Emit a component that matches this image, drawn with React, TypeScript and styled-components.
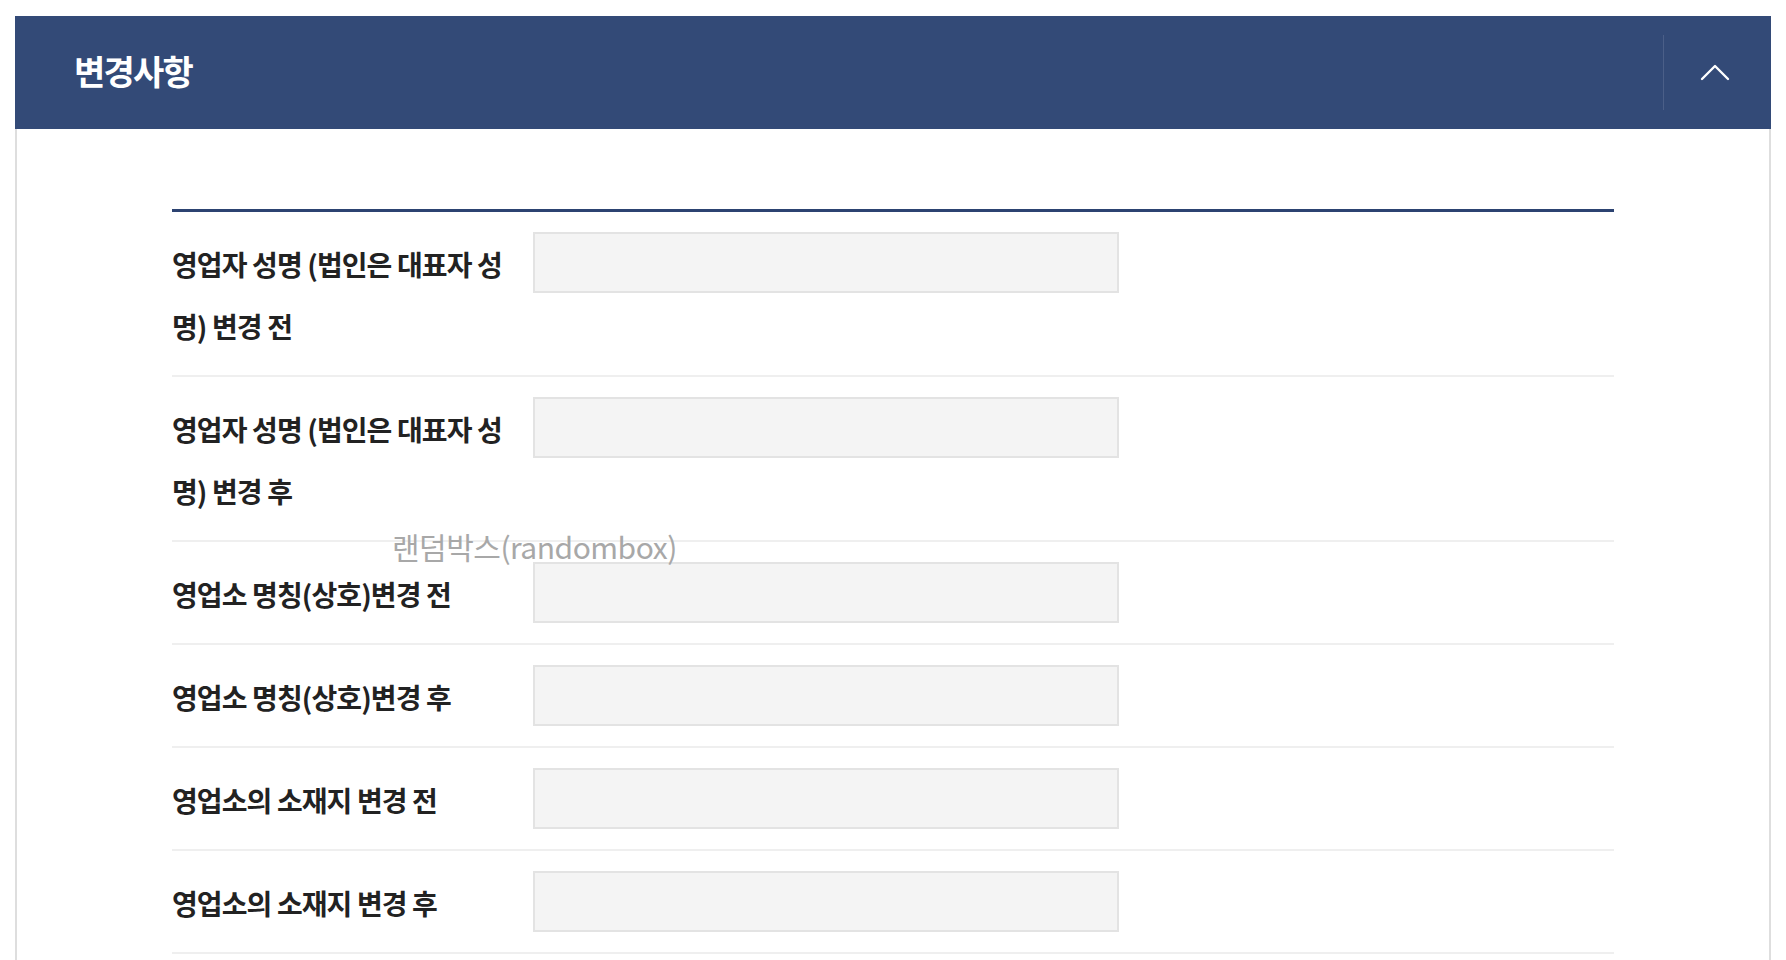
import React from 'react';
import styled, { createGlobalStyle } from 'styled-components';

const GlobalStyle = createGlobalStyle`
  html, body {
    margin: 0;
    padding: 0;
    background: #ffffff;
  }
  body {
    font-family: "Noto Sans CJK KR", "Noto Sans", sans-serif;
    color: #222222;
  }
`;

interface Field {
  label: string;
  value?: string;
}

const fields: Field[] = [
  { label: '영업자 성명 (법인은 대표자 성명) 변경 전' },
  { label: '영업자 성명 (법인은 대표자 성명) 변경 후' },
  { label: '영업소 명칭(상호)변경 전' },
  { label: '영업소 명칭(상호)변경 후' },
  { label: '영업소의 소재지 변경 전' },
  { label: '영업소의 소재지 변경 후' },
];

function App() {
  return (
    <>
      <GlobalStyle />
      <Page>
        <Panel>
          <Header>
            <Title>변경사항</Title>
            <ToggleButton aria-label="접기">
              <svg width="30" height="17" viewBox="0 0 30 17" fill="none">
                <path d="M2 15 L15 2 L28 15" stroke="#ffffff" strokeWidth="2.4" strokeLinecap="round" strokeLinejoin="round" />
              </svg>
            </ToggleButton>
          </Header>
          <Body>
            <FieldTable>
              {fields.map((f) => (
                <Row key={f.label}>
                  <Label>{f.label}</Label>
                  <ValueBox>{f.value}</ValueBox>
                </Row>
              ))}
            </FieldTable>
          </Body>
          <Watermark>랜덤박스(randombox)</Watermark>
        </Panel>
      </Page>
    </>
  );
}

const Page = styled.div`
  padding: 16px 15px 0 15px;
`;

const Panel = styled.section`
  position: relative;
  border-left: 2px solid #dedede;
  border-right: 2px solid #dedede;
  min-height: 944px;
  box-sizing: border-box;
`;

const Header = styled.div`
  display: flex;
  align-items: center;
  height: 113px;
  margin: 0 -2px;
  background: #334a77;
  padding-left: 59px;
`;

const Title = styled.h2`
  margin: 0;
  flex: 1;
  font-size: 34px;
  font-weight: 700;
  letter-spacing: -1.8px;
  color: #ffffff;
  padding-bottom: 4px;
`;

const ToggleButton = styled.button`
  display: flex;
  align-items: center;
  justify-content: center;
  width: 108px;
  height: 75px;
  padding: 0 6px 0 0;
  border: none;
  border-left: 1px solid #4b5f88;
  background: transparent;
  cursor: pointer;
`;

const Body = styled.div`
  padding: 80px 155px 0 155px;
`;

const FieldTable = styled.div`
  border-top: 3px solid #2c4371;
`;

const Row = styled.div`
  display: flex;
  align-items: flex-start;
  gap: 23px;
  padding: 20px 0 19px 0;
  border-bottom: 2px solid #efefef;
`;

const Label = styled.div`
  width: 338px;
  flex-shrink: 0;
  margin: 1px 0 -1px 0;
  font-size: 28px;
  line-height: 62px;
  font-weight: 700;
  letter-spacing: -0.9px;
  color: #222222;
`;

const ValueBox = styled.div`
  width: 586px;
  height: 61px;
  box-sizing: border-box;
  background: #f4f4f4;
  border: 2px solid #e3e3e3;
`;

const Watermark = styled.div`
  position: absolute;
  left: 375px;
  top: 508px;
  font-size: 30px;
  font-weight: 400;
  letter-spacing: -0.5px;
  color: #a8a8a8;
  pointer-events: none;
`;

export default App;
